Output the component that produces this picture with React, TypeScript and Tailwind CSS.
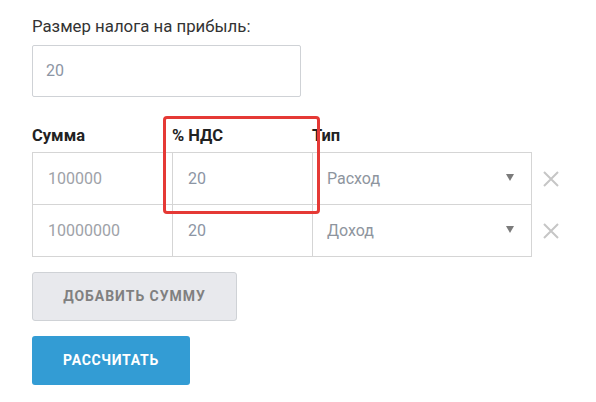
const rows = [
  { sum: "100000", vat: "20", type: "Расход" },
  { sum: "10000000", vat: "20", type: "Доход" },
];

export default function App() {
  return (
    <div className="relative min-h-[402px] w-[596px] bg-white px-8 pt-[16px] font-['Roboto',sans-serif] text-[#333]">
      <label className="block text-[16.8px] leading-5">Размер налога на прибыль:</label>
      <div className="mt-[9px] flex h-[52px] w-[269px] items-center rounded-[2px] border border-[#cfd2d6] px-[13px] text-[16px] text-[#8c95a4]">
        20
      </div>

      {/* таблица сумм */}
      <div className="mt-[29px] flex w-[499px] pb-[6px] text-[16.5px] font-bold leading-5 text-[#222]">
        <div className="w-[140px]">Сумма</div>
        <div className="w-[140px]">% НДС</div>
        <div>Тип</div>
      </div>
      <div className="flex flex-col">
        {rows.map((r, i) => (
          <div key={i} className="flex items-center">
            <div
              className={`flex w-[500px] border-x border-b border-[#d5d5d5] text-[16px] text-[#9ea2a8] ${
                i === 0 ? "h-[53px] border-t" : "h-[52px]"
              }`}
            >
              <div className="flex w-[140px] items-center border-r border-[#d5d5d5] pl-[15px]">{r.sum}</div>
              <div className="flex w-[140px] items-center border-r border-[#d5d5d5] pl-[15px] text-[#8c95a4]">
                {r.vat}
              </div>
              <div className="flex flex-1 items-center justify-between pl-[14px] pr-[17px] text-[#8e959e]">
                <span>{r.type}</span>
                <svg width="8" height="7" viewBox="0 0 8 7" className="mb-[2px]">
                  <path d="M0 0 H8 L4 7 Z" fill="#7b7b7b" />
                </svg>
              </div>
            </div>
            <svg width="16" height="16" viewBox="0 0 16 16" className="ml-[11px]">
              <path d="M1 1 L15 15 M15 1 L1 15" stroke="#c6c6c6" strokeWidth="2" />
            </svg>
          </div>
        ))}
      </div>

      <button className="mt-[15px] block h-[49px] w-[205px] rounded-[3px] border border-[#cfd2d6] bg-[#e8e9ed] text-[14px] font-bold tracking-[0.07em] text-[#808080]">
        ДОБАВИТЬ СУММУ
      </button>
      <button className="mt-[15px] block h-[49px] w-[158px] rounded-[3px] bg-[#339cd4] text-[14px] font-bold tracking-[0.05em] text-white">
        РАССЧИТАТЬ
      </button>

      {/* выделение колонки */}
      <div className="pointer-events-none absolute left-[163px] top-[116px] h-[98px] w-[157px] rounded-[4px] border-[3px] border-[#e53935]" />
    </div>
  );
}
